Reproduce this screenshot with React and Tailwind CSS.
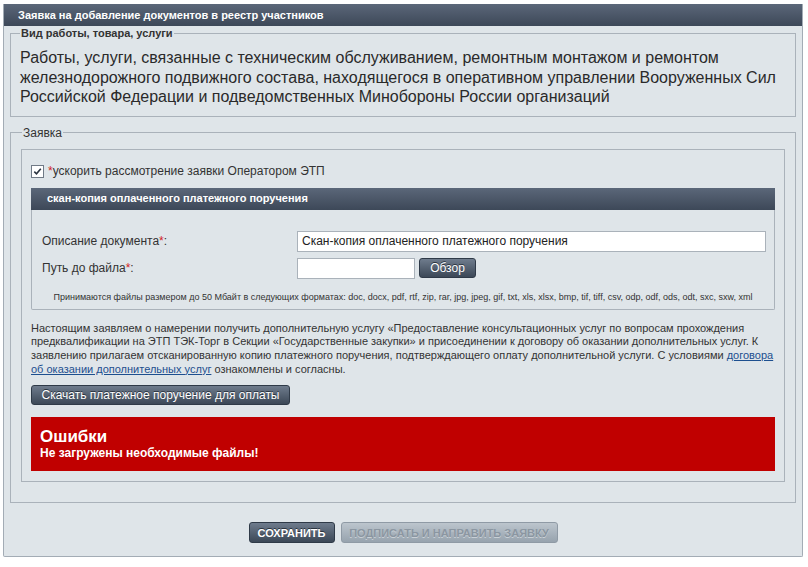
import React from 'react';

const font = { fontFamily: '"Liberation Sans", Arial, sans-serif' };

function Btn({ children, className = '' }) {
  return (
    <button
      type="button"
      className={`h-[20px] rounded-[3px] border border-[#2f3a48] bg-gradient-to-b from-[#6f7c8d] to-[#3c4857] text-[12px] leading-none text-white [text-shadow:0_-1px_0_#2a333e] ${className}`}
    >
      {children}
    </button>
  );
}

function Req() {
  return <span className="text-[#d21f1f]">*</span>;
}

export default function App() {
  return (
    <div style={font} className="bg-white w-[808px] h-[567px] pt-[4px] pl-[3px] text-[#222]">
      <div className="w-[800px] border border-[#a3acb5] border-t-0 bg-[#dfe5e9] rounded-b-[2px] pb-[13px]">
        {/* Header */}
        <div className="h-[22px] bg-gradient-to-b from-[#5b6779] to-[#3d4858] pl-[14px] flex items-center text-[11px] font-bold text-white">
          Заявка на добавление документов в реестр участников
        </div>

        <div className="px-[6px]">
          {/* Fieldset 1 */}
          <fieldset className="mt-px border border-[#aab2ba] pl-[9px] pr-[9px] pt-[8px] pb-[9px]">
            <legend className="px-px text-[11px] font-bold leading-[13px] text-[#333]">
              Вид работы, товара, услуги
            </legend>
            <p className="text-[16px] leading-[19.5px] text-[#2a2a2a]">
              Работы, услуги, связанные с техническим обслуживанием, ремонтным монтажом и ремонтом
              железнодорожного подвижного состава, находящегося в оперативном управлении Вооруженных Сил
              Российской Федерации и подведомственных Минобороны России организаций
            </p>
          </fieldset>

          {/* Fieldset 2 */}
          <fieldset className="mt-[9px] border border-[#aab2ba] px-[10px] pt-[9px] pb-[20px]">
            <legend className="ml-px px-px text-[12px] leading-[14px] text-[#333]">Заявка</legend>

            <div className="border border-[#aab2ba] px-[9px] pt-[15px] pb-[10px]">
              <label className="flex items-center h-[13px] text-[12px] text-[#333]">
                <span className="w-[13px] h-[13px] border border-[#707a86] bg-white flex items-center justify-center">
                  <svg width="9" height="9" viewBox="0 0 9 9">
                    <path d="M1.3 4.6 L3.5 6.8 L7.8 1.8" fill="none" stroke="#2b3440" strokeWidth="1.6" />
                  </svg>
                </span>
                <span className="ml-[4px]"><Req />ускорить рассмотрение заявки Оператором ЭТП</span>
              </label>

              {/* Sub-panel */}
              <div className="mt-[10px]">
                <div className="h-[22px] bg-gradient-to-b from-[#5b6779] to-[#3d4858] pl-[16px] flex items-center text-[11px] font-bold text-white">
                  скан-копия оплаченного платежного поручения
                </div>
                <div className="border border-t-0 border-[#aab2ba] rounded-b-[2px] pt-[21px] pb-[6px]">
                  <div className="grid grid-cols-[255px_1fr] gap-y-[6px] pl-[10px] pr-[8px] text-[12px] text-[#333]">
                    <div className="flex items-center h-[21px]">Описание документа<Req />:</div>
                    <input
                      readOnly
                      value="Скан-копия оплаченного платежного поручения"
                      className="h-[21px] border border-[#aab2ba] bg-white px-[4px] text-[12px] text-[#222] outline-none"
                    />
                    <div className="flex items-center h-[21px]">Путь до файла<Req />:</div>
                    <div className="flex items-center gap-[4px]">
                      <input readOnly className="w-[118px] h-[21px] border border-[#aab2ba] bg-white outline-none" />
                      <Btn className="w-[57px]">Обзор</Btn>
                    </div>
                  </div>
                  <div className="mt-[13px] text-center text-[9px] leading-[11px] text-[#333]">
                    Принимаются файлы размером до 50 Мбайт в следующих форматах: doc, docx, pdf, rtf, zip, rar, jpg, jpeg, gif, txt, xls, xlsx, bmp, tif, tiff, csv, odp, odf, ods, odt, sxc, sxw, xml
                  </div>
                </div>
              </div>

              <p className="mt-[12px] text-[11px] leading-[13.7px] text-[#333]">
                Настоящим заявляем о намерении получить дополнительную услугу «Предоставление консультационных услуг по вопросам прохождения
                предквалификации на ЭТП ТЭК-Торг в Секции «Государственные закупки» и присоединении к договору об оказании дополнительных услуг. К
                заявлению прилагаем отсканированную копию платежного поручения, подтверждающего оплату дополнительной услуги. С условиями{' '}
                <a className="text-[#1d4f8f] underline">договора об оказании дополнительных услуг</a> ознакомлены и согласны.
              </p>

              <Btn className="mt-[9px] w-[259px]">Скачать платежное поручение для оплаты</Btn>

              <div className="mt-[11px] h-[54px] bg-[#c00000] pl-[9px] pt-[10px] text-white font-bold">
                <div className="text-[17px] leading-[19px]">Ошибки</div>
                <div className="text-[12px] leading-[15px]">Не загружены необходимые файлы!</div>
              </div>
            </div>
          </fieldset>
        </div>

        {/* Bottom buttons */}
        <div className="mt-[19px] flex justify-center gap-[6px]">
          <button
            type="button"
            className="w-[86px] h-[21px] rounded-[3px] border border-[#2f3a48] bg-gradient-to-b from-[#6f7c8d] to-[#3c4857] text-[11px] font-bold text-white [text-shadow:0_-1px_0_#2a333e]"
          >
            СОХРАНИТЬ
          </button>
          <button
            type="button"
            disabled
            className="w-[217px] h-[21px] rounded-[3px] border border-[#8f9aa5] bg-gradient-to-b from-[#bcc5cd] to-[#97a3ae] text-[11px] font-bold text-[#8b96a1] [text-shadow:0_1px_0_#c9d0d6]"
          >
            ПОДПИСАТЬ И НАПРАВИТЬ ЗАЯВКУ
          </button>
        </div>
      </div>
    </div>
  );
}
